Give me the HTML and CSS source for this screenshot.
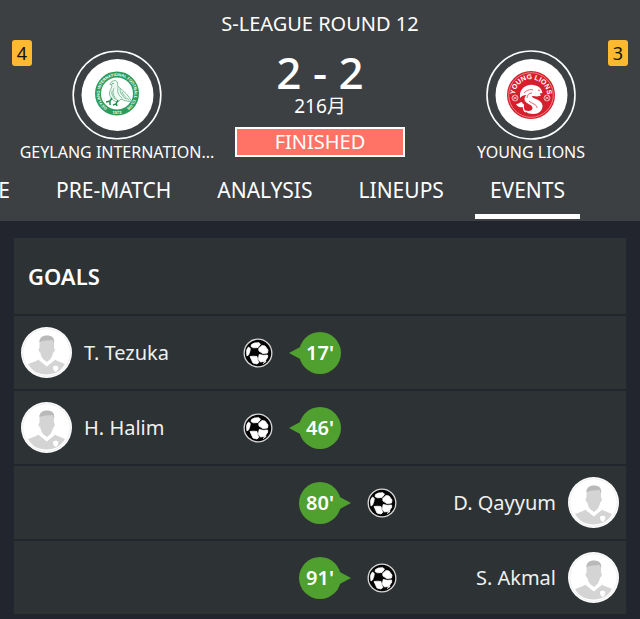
FILE: index.html
```html
<!DOCTYPE html>
<html lang="en">
<head>
<meta charset="utf-8">
<meta name="viewport" content="width=device-width, initial-scale=1">
<title>S-League Round 12</title>
<link rel="stylesheet" href="styles.css">
</head>
<body>
<svg class="sprite" aria-hidden="true">
  <defs>
    <clipPath id="face"><circle cx="25.500" cy="25.500" r="23.500"/></clipPath>
    <clipPath id="ballclip"><circle cx="15" cy="15" r="12"/></clipPath>
    <symbol id="player" viewBox="0 0 51 51">
      <circle cx="25.500" cy="25.500" r="25.500" fill="#fff"/>
      <circle cx="25.500" cy="25.500" r="23.800" fill="none" stroke="#eee" stroke-width="1"/>
      <g clip-path="url(#face)">
        <path fill="#d4d4d4" d="M7 37c5-2 9-3 12-5l7 5 6-5c4 2 8 3 12 5-4 7-10 10.500-18.500 10.500S11 44 7 37z"/>
        <path fill="#d4d4d4" d="M18.500 13h14.500v8c1.500 0 1 4-.8 4.500-.7 3-1.700 5-2.700 6.500L26 35l-4-3c-1.500-2-2.200-4-2.700-6.500-1.800-.5-2.300-4.500-.8-4.500z"/>
        <path fill="#b9b9b9" d="M18.500 15c0-4 2.500-6.500 7.500-6.500 4.500 0 7.200 2 7.200 6v2c-.4-1.500-.9-2.500-1.700-3.500-4 .2-9 .5-13 2z"/>
        <path fill="none" stroke="#fff" stroke-width="2.500" d="M18.500 32l7.300 6 7.200-6"/>
        <path fill="#fff" d="M32 39.500c1.500 0 2-.6 2.700-.9.700.3 1.200.9 2.600.9 0 3-.6 4.500-2.600 5.500-2-1-2.700-2.500-2.700-5.500z"/>
      </g>
    </symbol>
    <symbol id="ball" viewBox="0 0 30 30">
      <circle cx="15" cy="15" r="14.500" fill="#d8d8d8"/>
      <circle cx="15" cy="15" r="13.200" fill="#050505"/>
      <g fill="#fff" stroke="#fff" stroke-width=".8" stroke-linejoin="round" clip-path="url(#ballclip)">
        <path d="M8.500 6.500l3-1.500 4.500-.3 1.500 1.500-2.500 3.300-4.500.3-2.500-1.300z"/>
        <path d="M19 7.500l3 .5 3 4-.5 3-4.500.6-4-2.600-.3-2.500z"/>
        <path d="M16.200 16.500l4 .8 4.300-.3.3 2-2.800 4.200-4.500.8-2.200-2.500z"/>
        <path d="M7 18.500l3.500-.3 3.500.3.600 3 1.200 3-2 1.500-3.800-1z"/>
        <path d="M3.500 11.500l2-2.500 1.800 1.500-.5 3-1.300 3.500-1.700 1z"/>
        <path d="M20 25.500l3.200-2.500-1 2z"/>
      </g>
    </symbol>
  </defs>
</svg>

<header class="header">
  <h1 class="round">S-LEAGUE ROUND 12</h1>
  <div class="scoreboard">
    <span class="rank">4</span>
    <div class="team team-home">
      <svg class="crest" viewBox="0 0 90 90" role="img" aria-label="Geylang crest">
        <circle cx="45" cy="45" r="43.800" fill="none" stroke="#fff" stroke-width="1.600"/>
        <circle cx="45.500" cy="45" r="36" fill="#fff"/>
        <circle cx="45" cy="43.500" r="19" fill="none" stroke="#2c9c5c" stroke-width="6"/>
        <path id="arc-a" fill="none" d="M34.500 57.500A17.500 17.500 0 1 1 55.500 57.500"/>
        <text class="crest-small"><textPath href="#arc-a" startOffset="50%">GEYLANG INTERNATIONAL FOOTBALL CLUB</textPath></text>
        <text class="crest-small" x="45" y="64">1973</text>
        <g fill="none" stroke="#5fae83" stroke-width=".8" stroke-linecap="round" stroke-linejoin="round">
          <path fill="#f3faf5" d="M38 34c1-3 5-4.500 7-2.500 1.500 2-.5 3.500 1.500 5.500C52 41 57 46 60 52c-4-1-8-1-11-3l-3 3c-4 0-8-4-8.500-8-.5-4 3-6 2.500-9z"/>
          <path d="M46 37c-1 5 0 8 4 11M48 39c0 4 2 7 6 10M50 42c1 3 3 5 7 8M42 38c-2 4-1 8 3 12M40 41c-1 3 1 6 3 8"/>
        </g>
        <path fill="none" stroke="#258c50" stroke-width="1.500" d="M40 48l-2 3-4 1M38 51v4M46 50l-2 4-3 1M44 53l1 3"/>
        <circle cx="41" cy="33.500" r=".7" fill="#258c50"/>
      </svg>
      <span class="team-name">GEYLANG INTERNATION...</span>
    </div>
    <div class="result">
      <strong class="score">2 - 2</strong>
      <span class="date">216月</span>
      <span class="status">FINISHED</span>
    </div>
    <div class="team team-away">
      <svg class="crest" viewBox="0 0 90 90" role="img" aria-label="Young Lions crest">
        <circle cx="45" cy="45" r="44" fill="none" stroke="#fff" stroke-width="1.600"/>
        <circle cx="45.500" cy="45" r="36" fill="#fff"/>
        <circle cx="45" cy="45" r="24" fill="#d51f2c"/>
        <circle cx="45" cy="45" r="22.300" fill="none" stroke="#f4a8ad" stroke-width=".7"/>
        <path id="arc-b" fill="none" d="M29 48A16.200 16.200 0 1 1 61 48"/>
        <text class="crest-bold"><textPath href="#arc-b" startOffset="50%">YOUNG LIONS</textPath></text>
        <g fill="#d51f2c" stroke="#f6bfc3" stroke-width=".9">
          <circle cx="29" cy="48" r="3"/><circle cx="61" cy="48" r="3"/>
          <path d="M27 46.500l4 3m0-3l-4 3M59 46.500l4 3m0-3l-4 3"/>
        </g>
        <path fill="#fff" d="M34 44c1-6 7-10 13-9 4 .5 7 2 8.500 5l1 3-3 .5 1.500 2-4 1c-2 0-4-1-5 0 0 2 10 3 10.500 9 .3 5-4 8.500-9 8.500-4 0-7-1-9-4 4 2 8 1 8-2 0-4-8-4-8-9 0-2 1-3 2-4-3 0-5 1-6.500 3z"/>
        <path fill="none" stroke="#d51f2c" stroke-width=".7" d="M38 43c3-3 6-4 9-3M41 48c0-3 2-5 5-5M43 51c3 3 8 3 8 7M52 40l2 .5"/>
        <path fill="none" stroke="#fff" stroke-width="1.200" d="M40 62c-4-1-1-5-4-7"/>
        <path fill="#fff" d="M30 54c3 0 4-2 6-2 0 2 3 2 2 4-2 2-6 2-8-2z"/>
      </svg>
      <span class="team-name">YOUNG LIONS</span>
    </div>
    <span class="rank">3</span>
  </div>
  <nav class="tabs">
    <a class="tab" href="#">E</a>
    <a class="tab" href="#">PRE-MATCH</a>
    <a class="tab" href="#">ANALYSIS</a>
    <a class="tab" href="#">LINEUPS</a>
    <a class="tab tab-active" href="#" aria-current="page">EVENTS</a>
  </nav>
</header>

<main class="card">
  <h2 class="card-title">GOALS</h2>
  <ul class="goals">
    <li class="goal">
      <div class="scorer">
        <svg class="avatar"><use href="#player"/></svg>
        <span class="name">T. Tezuka</span>
        <svg class="ball"><use href="#ball"/></svg>
      </div>
      <span class="minute">17'</span>
    </li>
    <li class="goal">
      <div class="scorer">
        <svg class="avatar"><use href="#player"/></svg>
        <span class="name">H. Halim</span>
        <svg class="ball"><use href="#ball"/></svg>
      </div>
      <span class="minute">46'</span>
    </li>
    <li class="goal goal-away">
      <span class="minute">80'</span>
      <div class="scorer">
        <svg class="ball"><use href="#ball"/></svg>
        <span class="name">D. Qayyum</span>
        <svg class="avatar"><use href="#player"/></svg>
      </div>
    </li>
    <li class="goal goal-away">
      <span class="minute">91'</span>
      <div class="scorer">
        <svg class="ball"><use href="#ball"/></svg>
        <span class="name">S. Akmal</span>
        <svg class="avatar"><use href="#player"/></svg>
      </div>
    </li>
  </ul>
</main>
</body>
</html>
```
FILE: styles.css
```css
* {
  box-sizing: border-box;
}

body {
  margin: 0;
  background: #22252e;
  color: #fff;
  font-family: "Noto Sans", "Noto Sans CJK SC", sans-serif;
  font-size: 20px;
  line-height: 24px;
}

.sprite {
  position: absolute;
  width: 0;
  height: 0;
}

.header {
  padding-top: 12px;
  background: #3c4043;
  overflow: hidden;
}

.round {
  margin: 0;
  font-size: 20px;
  font-weight: 400;
  line-height: 24px;
  text-align: center;
}

.scoreboard {
  display: grid;
  grid-template-columns: 20px minmax(0, 1fr) 170px minmax(0, 1fr) 20px;
  padding: 4px 12px 0;
}

.rank {
  height: 26px;
  border-radius: 3px;
  background: #fdb930;
  color: #111;
  font-size: 18px;
  line-height: 26px;
  text-align: center;
}

.team {
  display: flex;
  flex-direction: column;
  align-items: center;
  padding-top: 10px;
}

.team-home {
  margin: 0 21px 0 -12px;
}

.team-away {
  margin: 0 -12px 0 37px;
}

.crest {
  width: 90px;
  height: 90px;
}

.crest-small,
.crest-bold {
  fill: #fff;
  font-family: "Liberation Sans", sans-serif;
  font-weight: 700;
  text-anchor: middle;
}

.crest-small {
  font-size: 4px;
}

.crest-bold {
  font-size: 7px;
}

.team-name {
  font-size: 16px;
  line-height: 24px;
  white-space: nowrap;
}

.result {
  display: flex;
  flex-direction: column;
  text-align: center;
}

.score {
  padding-top: 8px;
  font-size: 44px;
  font-weight: 500;
  line-height: 48px;
}

.date {
  font-size: 19px;
  line-height: 20px;
}

.status {
  margin-top: 11px;
  border: 2px solid #fff;
  background: #ff7366;
  line-height: 26px;
}

.tabs {
  display: flex;
  justify-content: flex-end;
  gap: 16px;
  padding: 12px 60px 2px 0;
}

.tab {
  padding: 0 15px 9px;
  border-bottom: 5px solid transparent;
  color: inherit;
  font-size: 21px;
  line-height: 29px;
  text-decoration: none;
  white-space: nowrap;
}

.tab-active {
  border-color: #fff;
}

.card {
  margin: 17px 14px 5px;
  background: #2d3234;
}

.card-title {
  margin: 0;
  padding: 24px 14px;
  font-size: 22px;
  font-weight: 600;
  line-height: 28px;
}

.goals {
  margin: 0;
  padding: 0;
  list-style: none;
}

.goal {
  display: grid;
  grid-template-columns: 1fr 42px 1fr;
  align-items: center;
  height: 75px;
  border-top: 2px solid #22252e;
}

.goal-away .minute {
  grid-column: 2;
}

.scorer {
  display: flex;
  align-items: center;
  gap: 12px;
  padding: 0 26px 0 7px;
}

.goal-away .scorer {
  padding: 0 7px 0 26px;
}

.name {
  flex: 1;
  color: #f0f0f0;
  font-size: 20px;
}

.goal-away .name {
  text-align: right;
}

.avatar {
  width: 51px;
  height: 51px;
}

.ball {
  width: 30px;
  height: 30px;
}

.minute {
  position: relative;
  height: 42px;
  border-radius: 50%;
  background: #50a02f;
  font-size: 20px;
  font-weight: 600;
  line-height: 42px;
  text-align: center;
}

.minute::before {
  content: "";
  position: absolute;
  top: 14px;
  left: -10px;
  width: 14px;
  height: 15px;
  background: #50a02f;
  clip-path: polygon(0 50%, 60% 20%, 100% 0, 100% 100%, 60% 80%);
}

.goal-away .minute::before {
  left: auto;
  right: -10px;
  clip-path: polygon(100% 50%, 40% 20%, 0 0, 0 100%, 40% 80%);
}
```
